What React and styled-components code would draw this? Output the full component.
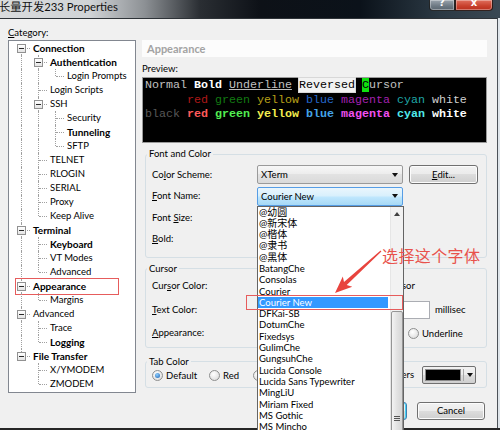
import React from "react";
import styled, { createGlobalStyle } from "styled-components";

const UI = `Lato, "Noto Sans CJK SC", sans-serif`;

const Global = createGlobalStyle`
  html, body { margin: 0; padding: 0; overflow: hidden; width: 500px; height: 430px; background: #f0f0f0; }
  body { font-family: ${UI}; font-size: 9.5px; color: #000; }
  * { box-sizing: border-box; }
`;

/* ---------- window chrome ---------- */
const Window = styled.div`
  position: relative;
  width: 500px;
  height: 430px;
  display: flex;
  flex-direction: column;
  border-bottom: 2px solid #262626;
`;
const TitleBar = styled.div`
  height: 18px;
  flex: none;
  display: flex;
  align-items: flex-start;
  background: linear-gradient(90deg, #d9dbdd 0, #d0d3d6 90px, #8c9094 145px, #2a2e33 200px, #0d1117 260px, #0b121a 360px, #2b3944 440px, #3a4853 500px);
`;
const TitleText = styled.div`
  font-family: ${UI};
  font-size: 11.3px;
  line-height: 14px;
  text-indent: -1px;
  color: #111;
  white-space: nowrap;
`;
const Caption = styled.div`
  margin-left: auto;
  margin-right: 7px;
  display: flex;
`;
const CapButton = styled.div`
  width: ${(p) => p.$w}px;
  height: 11px;
  border: 1px solid rgba(20, 20, 20, 0.85);
  border-top: none;
  border-radius: ${(p) => (p.$close ? "0 0 4px 0" : "0 0 0 4px")};
  background: ${(p) =>
    p.$close
      ? "linear-gradient(#e0705e, #c8402c 60%, #b8301e)"
      : "linear-gradient(#9aa4ad, #6d7983 60%, #5a6670)"};
  box-shadow: inset 0 0 0 1px rgba(255, 255, 255, 0.35);
  color: #fff;
  font-family: "DejaVu Sans", sans-serif;
  font-weight: bold;
  font-size: 10px;
  line-height: 6px;
  text-align: center;
  overflow: hidden;
`;
const Frame = styled.div`
  flex: 1;
  display: flex;
  min-height: 0;
`;
const Client = styled.div`
  flex: 1;
  background: #f0f0f0;
  border-top: 1px solid #2e3338;
  border-right: 1px solid #4c5258;
  display: flex;
  align-items: flex-start;
`;
const FrameEdge = styled.div`
  width: 2px;
  background: #dfe5ea;
`;

/* ---------- left: category tree ---------- */
const LeftColumn = styled.div`
  width: 136px;
  padding: 7px 0 0 8px;
`;
const Label = styled.div`
  line-height: ${(p) => p.$lh || 14}px;
  height: ${(p) => p.$lh || 14}px;
  white-space: nowrap;
  width: ${(p) => (p.$w ? p.$w + "px" : "auto")};
  margin-top: ${(p) => p.$mt || 0}px;
  flex: none;
`;
const Key = styled.span`
  text-decoration: underline;
`;
const TreeBox = styled.div`
  width: 128px;
  height: 353px;
  border: 1px solid #828790;
  background: #fff;
  padding-left: 4px;
`;
const TreeRow = styled.div`
  position: relative;
  display: flex;
  height: 14px;
  &::after {
    content: "";
    display: ${(p) => (p.$marked ? "block" : "none")};
    position: absolute;
    left: 2px;
    top: -1px;
    width: 102px;
    height: 15px;
    border: 1.5px solid #e65c5c;
  }
`;
const Guide = styled.div`
  position: relative;
  width: 17px;
  flex: none;
  &::before {
    content: "";
    display: ${(p) => (p.$line ? "block" : "none")};
    position: absolute;
    left: 8px;
    top: 0;
    bottom: 0;
    border-left: 1px dotted #a0a0a0;
  }
`;
const Connector = styled.div`
  position: relative;
  width: 17px;
  flex: none;
  &::before {
    content: "";
    position: absolute;
    left: 8px;
    top: ${(p) => (p.$rootFirst ? 7 : 0)}px;
    bottom: ${(p) => (p.$last ? 7 : 0)}px;
    border-left: 1px dotted #a0a0a0;
  }
  &::after {
    content: "";
    position: absolute;
    left: 9px;
    right: 0;
    top: 7px;
    border-top: 1px dotted #a0a0a0;
  }
`;
const Expander = styled.div`
  position: absolute;
  left: 4px;
  top: 3px;
  width: 9px;
  height: 9px;
  border: 1px solid #919191;
  background: linear-gradient(#ffffff, #e4e4e4);
  z-index: 1;
  &::after {
    content: "";
    position: absolute;
    left: 1px;
    top: 3px;
    width: 5px;
    height: 1px;
    background: #2a2a2a;
  }
`;
const TreeText = styled.span`
  margin-left: 2px;
  padding: 0 1px;
  line-height: 14px;
  white-space: nowrap;
  font-weight: ${(p) => (p.$bold ? 700 : 400)};
  font-size: ${(p) => (p.$bold ? 10 : 9.5)}px;
`;

const TREE = [
  {
    label: "Connection",
    bold: true,
    children: [
      { label: "Authentication", bold: true, children: [{ label: "Login Prompts" }] },
      { label: "Login Scripts" },
      {
        label: "SSH",
        children: [{ label: "Security" }, { label: "Tunneling", bold: true }, { label: "SFTP" }],
      },
      { label: "TELNET" },
      { label: "RLOGIN" },
      { label: "SERIAL" },
      { label: "Proxy" },
      { label: "Keep Alive" },
    ],
  },
  {
    label: "Terminal",
    bold: true,
    children: [{ label: "Keyboard", bold: true }, { label: "VT Modes" }, { label: "Advanced" }],
  },
  { label: "Appearance", bold: true, marked: true, children: [{ label: "Margins" }] },
  { label: "Advanced", children: [{ label: "Trace" }, { label: "Logging", bold: true }] },
  { label: "File Transfer", bold: true, children: [{ label: "X/YMODEM" }, { label: "ZMODEM" }] },
];

function flatten(nodes, depth = 0, guides = [], out = []) {
  nodes.forEach((n, i) => {
    const last = i === nodes.length - 1;
    out.push({ ...n, depth, guides, first: i === 0, last });
    if (n.children) flatten(n.children, depth + 1, [...guides, !last], out);
  });
  return out;
}

function CategoryTree() {
  const rows = flatten(TREE);
  return (
    <TreeBox>
      {rows.map((r, i) => (
        <TreeRow key={i} $marked={r.marked}>
          {r.guides.map((g, j) => (
            <Guide key={j} $line={g} />
          ))}
          <Connector $rootFirst={r.depth === 0 && r.first} $last={r.last}>
            {r.children && <Expander />}
          </Connector>
          <TreeText $bold={r.bold}>{r.label}</TreeText>
        </TreeRow>
      ))}
    </TreeBox>
  );
}

/* ---------- right panel ---------- */
const RightColumn = styled.div`
  width: 345px;
  margin-left: 6px;
  padding-top: 21px;
  display: flex;
  flex-direction: column;
`;
const PageHeader = styled.div`
  height: 17px;
  background: #fcfcfc;
  color: #a3a3a3;
  font-weight: 700;
  font-size: 11px;
  line-height: 17px;
  padding-left: 5px;
`;
const Preview = styled.div`
  height: 66px;
  background: #000;
  border: 1px solid #9a9a9a;
  padding: 0 2px;
  font-family: "Liberation Mono", "Courier New", monospace;
  font-size: 11.67px;
  line-height: 14.5px;
  white-space: pre;
  color: #c0c0c0;
`;
const Seg = styled.span`
  color: ${(p) => p.$c || "#c0c0c0"};
  font-weight: ${(p) => (p.$b ? 700 : 400)};
  text-decoration: ${(p) => (p.$u ? "underline" : "none")};
  background: ${(p) => p.$bg || "transparent"};
  outline: ${(p) => (p.$box ? "1px solid #d8d8d8" : "none")};
`;

const Group = styled.fieldset`
  margin: ${(p) => p.$mt}px 0 0 3px;
  border: 1px solid #d5dfe5;
  border-radius: 3px;
  padding: ${(p) => p.$pad};
  min-width: 0;
  display: flex;
  flex-direction: column;
  gap: ${(p) => p.$gap || 0}px;
`;
const Legend = styled.legend`
  margin-left: -5px;
  padding: 0 2px;
  line-height: 12px;
  font-size: 9.5px;
`;
const FormRow = styled.div`
  display: flex;
  align-items: center;
  height: ${(p) => p.$h || 19}px;
`;
const Combo = styled.div`
  position: relative;
  width: ${(p) => p.$w}px;
  height: 19px;
  flex: none;
  display: flex;
  align-items: center;
  padding: 0 4px 0 3px;
  border: 1px solid ${(p) => (p.$focus ? "#569de5" : "#9a9a9a")};
  border-radius: 2px;
  background: ${(p) =>
    p.$focus
      ? "linear-gradient(#eaf6fd 0%, #d9f0fc 45%, #bee6fd 55%, #a7d9f5 100%)"
      : "linear-gradient(#f7f7f7, #ececec 50%, #e2e2e2 50%, #dadada)"};
  white-space: nowrap;
`;
const DropArrow = styled.span`
  margin-left: auto;
  width: 0;
  height: 0;
  border-left: 3.5px solid transparent;
  border-right: 3.5px solid transparent;
  border-top: 4px solid #111;
`;
const Button = styled.div`
  width: ${(p) => p.$w}px;
  height: ${(p) => p.$h || 19}px;
  margin-left: ${(p) => p.$ml || 0}px;
  flex: none;
  display: flex;
  align-items: center;
  justify-content: center;
  border: 1px solid ${(p) => (p.$default ? "#3c7fb1" : "#707070")};
  border-radius: 3px;
  background: linear-gradient(#f2f2f2, #ebebeb 50%, #dddddd 50%, #cfcfcf);
  box-shadow: ${(p) => (p.$default ? "inset 0 0 0 1px #48d4f8" : "inset 0 0 0 1px #fcfcfc")};
  white-space: nowrap;
`;
const Swatch = styled.div`
  width: ${(p) => p.$w}px;
  height: 18px;
  flex: none;
  display: flex;
  align-items: stretch;
  padding: 2px 0 2px 2px;
  border: 1px solid #707070;
  border-radius: 2px;
  background: linear-gradient(#f2f2f2, #ebebeb 50%, #dddddd 50%, #cfcfcf);
`;
const SwatchColor = styled.div`
  flex: 1;
  background: ${(p) => p.$color};
  border: 1px solid #8a8a8a;
`;
const SwatchDrop = styled.div`
  width: 12px;
  display: flex;
  align-items: center;
  justify-content: center;
  border-left: 1px solid #a8a8a8;
  margin-left: 2px;
  & > span { margin: 0; }
`;
const Check = styled.span`
  width: 11px;
  height: 11px;
  flex: none;
  border: 1px solid #8e8f8f;
  background: linear-gradient(135deg, #dcdcdc, #fff);
  margin-right: 3px;
`;
const RadioItem = styled.div`
  display: flex;
  align-items: center;
  width: ${(p) => (p.$w ? p.$w + "px" : "auto")};
  flex: none;
  white-space: nowrap;
`;
const RadioDot = styled.span`
  position: relative;
  width: 11px;
  height: 11px;
  flex: none;
  border-radius: 50%;
  border: 1px solid #8e8f8f;
  background: radial-gradient(circle at 40% 35%, #ffffff, #d6d6d6);
  margin-right: 3px;
  &::after {
    content: "";
    display: ${(p) => (p.$on ? "block" : "none")};
    position: absolute;
    left: 2px;
    top: 2px;
    width: 5px;
    height: 5px;
    border-radius: 50%;
    background: radial-gradient(circle at 40% 35%, #8fd0ff, #1b5fb0);
  }
`;
const TextBox = styled.div`
  width: ${(p) => p.$w}px;
  height: 18px;
  flex: none;
  border: 1px solid #abadb3;
  background: #fff;
`;
const Spacer = styled.div`
  width: ${(p) => p.$w}px;
  flex: none;
`;
const PushRight = styled.div`
  margin-left: auto;
  display: flex;
  align-items: center;
  gap: 8px;
`;
const ButtonRow = styled.div`
  margin-top: 14px;
  display: flex;
  justify-content: flex-end;
  gap: 10px;
  padding-right: 2px;
`;

/* ---------- dropdown list ---------- */
const ComboAnchor = styled.div`
  position: relative;
  flex: none;
`;
const DropList = styled.div`
  position: absolute;
  top: 100%;
  left: 0;
  width: 147px;
  height: 232px;
  z-index: 10;
  display: flex;
  border: 1px solid #646464;
  background: #fff;
`;
const ListItems = styled.div`
  flex: 1;
  padding-right: 2px;
`;
const ListItem = styled.div`
  position: relative;
  height: 11.3px;
  line-height: 11.3px;
  padding-left: 1px;
  white-space: nowrap;
  font-size: ${(p) => (p.$cjk ? 10 : 9.5)}px;
  background: ${(p) => (p.$sel ? "#3399ff" : "transparent")};
  color: ${(p) => (p.$sel ? "#fff" : "#000")};
  &::after {
    content: "";
    display: ${(p) => (p.$sel ? "block" : "none")};
    position: absolute;
    left: -12px;
    right: -15px;
    top: -2px;
    bottom: -2px;
    border: 1.5px solid #e65c5c;
  }
`;
const ScrollBar = styled.div`
  width: 13px;
  flex: none;
  display: flex;
  flex-direction: column;
  background: #f2f2f2;
  border-left: 1px solid #e6e6e6;
`;
const ScrollUp = styled.div`
  height: 14px;
  display: flex;
  align-items: center;
  justify-content: center;
  &::after {
    content: "";
    border-left: 3px solid transparent;
    border-right: 3px solid transparent;
    border-bottom: 4px solid #404040;
  }
`;
const ScrollThumb = styled.div`
  margin-top: 90px;
  flex: 1;
  border: 1px solid #959595;
  border-radius: 2px;
  background: linear-gradient(90deg, #f3f3f3, #e2e2e2 50%, #d6d6d6);
  display: flex;
  justify-content: center;
  padding-top: 104px;
`;
const Grip = styled.div`
  width: 6px;
  height: 5px;
  background: repeating-linear-gradient(#555 0 1px, transparent 1px 2px);
`;

const FONTS = [
  ["@幼圆", true],
  ["@新宋体", true],
  ["@楷体", true],
  ["@隶书", true],
  ["@黑体", true],
  ["BatangChe"],
  ["Consolas"],
  ["Courier"],
  ["Courier New", false, true],
  ["DFKai-SB"],
  ["DotumChe"],
  ["Fixedsys"],
  ["GulimChe"],
  ["GungsuhChe"],
  ["Lucida Console"],
  ["Lucida Sans Typewriter"],
  ["MingLiU"],
  ["Miriam Fixed"],
  ["MS Gothic"],
  ["MS Mincho"],
];

/* ---------- annotation ---------- */
const AnnotText = styled.div`
  position: absolute;
  left: 382px;
  top: 246px;
  z-index: 20;
  font-family: "Noto Sans CJK SC", sans-serif;
  font-size: 16px;
  line-height: 18px;
  letter-spacing: 0.4px;
  color: #e8524c;
  white-space: nowrap;
`;
const AnnotArrow = styled.svg`
  position: absolute;
  left: 330px;
  top: 245px;
  z-index: 20;
`;

function ColorPick({ w, color }) {
  return (
    <Swatch $w={w}>
      <SwatchColor $color={color} />
      <SwatchDrop>
        <DropArrow />
      </SwatchDrop>
    </Swatch>
  );
}

export default function App() {
  return (
    <>
      <Global />
      <Window>
        <TitleBar>
          <TitleText>长量开发233 Properties</TitleText>
          <Caption>
            <CapButton $w={26}>?</CapButton>
            <CapButton $w={38} $close>x</CapButton>
          </Caption>
        </TitleBar>
        <Frame>
          <Client>
            <LeftColumn>
              <Label $lh={14}>
                <Key>C</Key>ategory:
              </Label>
              <CategoryTree />
            </LeftColumn>

            <RightColumn>
              <PageHeader>Appearance</PageHeader>
              <Label $lh={16} $mt={4}>Preview:</Label>
              <Preview>
                <div>
                  <Seg>Normal </Seg>
                  <Seg $c="#ffffff" $b>Bold</Seg>
                  <Seg> </Seg>
                  <Seg $u>Underline</Seg>
                  <Seg> </Seg>
                  <Seg $c="#000" $bg="#f2f2f2" $box>Reversed</Seg>
                  <Seg> </Seg>
                  <Seg $c="#000" $bg="#10e010">C</Seg>
                  <Seg>ursor</Seg>
                </div>
                <div>
                  <Seg>      </Seg>
                  <Seg $c="#b01818">red</Seg> <Seg $c="#127a12">green</Seg>{" "}
                  <Seg $c="#b8a018">yellow</Seg> <Seg $c="#2468cc">blue</Seg>{" "}
                  <Seg $c="#a420b0">magenta</Seg> <Seg $c="#1fa8a8">cyan</Seg>{" "}
                  <Seg $c="#d0d0d0">white</Seg>
                </div>
                <div>
                  <Seg $c="#585858">black</Seg> <Seg $c="#ff5a5a" $b>red</Seg>{" "}
                  <Seg $c="#52ee52" $b>green</Seg> <Seg $c="#f4ee50" $b>yellow</Seg>{" "}
                  <Seg $c="#44a4e8" $b>blue</Seg> <Seg $c="#f050f0" $b>magenta</Seg>{" "}
                  <Seg $c="#50eaea" $b>cyan</Seg> <Seg $c="#ffffff" $b>white</Seg>
                </div>
              </Preview>

              <Group $mt={5} $pad="5px 6px 8px" $gap={2.5}>
                <Legend>Font and Color</Legend>
                <FormRow>
                  <Label $w={105}>
                    Co<Key>l</Key>or Scheme:
                  </Label>
                  <Combo $w={146}>
                    XTerm
                    <DropArrow />
                  </Combo>
                  <Button $w={69} $ml={6}>
                    <Key>E</Key>dit...
                  </Button>
                </FormRow>
                <FormRow>
                  <Label $w={105}>
                    <Key>F</Key>ont Name:
                  </Label>
                  <ComboAnchor>
                    <Combo $w={146} $focus>
                      Courier New
                      <DropArrow />
                    </Combo>
                    <DropList>
                      <ListItems>
                        {FONTS.map(([name, cjk, sel]) => (
                          <ListItem key={name} $cjk={cjk} $sel={sel}>
                            {name}
                          </ListItem>
                        ))}
                      </ListItems>
                      <ScrollBar>
                        <ScrollUp />
                        <ScrollThumb>
                          <Grip />
                        </ScrollThumb>
                      </ScrollBar>
                    </DropList>
                  </ComboAnchor>
                </FormRow>
                <FormRow>
                  <Label $w={105}>
                    Font <Key>S</Key>ize:
                  </Label>
                  <Combo $w={60}>
                    <DropArrow />
                  </Combo>
                </FormRow>
                <FormRow>
                  <Label $w={105}>
                    <Key>B</Key>old:
                  </Label>
                  <Combo $w={120}>
                    <DropArrow />
                  </Combo>
                </FormRow>
              </Group>

              <Group $mt={5} $pad="2px 6px 4px" $gap={4.5}>
                <Legend>Cursor</Legend>
                <FormRow>
                  <Label $w={105}>
                    Cur<Key>s</Key>or Color:
                  </Label>
                  <ColorPick w={74} color="#00ff00" />
                  <Spacer $w={8} />
                  <Check />
                  <Label>Blinking cursor</Label>
                </FormRow>
                <FormRow>
                  <Label $w={105}>
                    <Key>T</Key>ext Color:
                  </Label>
                  <ColorPick w={74} color="#000000" />
                  <Spacer $w={54} />
                  <TextBox $w={45} />
                  <Spacer $w={5} />
                  <Label>millisec</Label>
                </FormRow>
                <FormRow>
                  <Label $w={105}>
                    <Key>A</Key>ppearance:
                  </Label>
                  <RadioItem $w={75}>
                    <RadioDot $on />
                  </RadioItem>
                  <RadioItem $w={76}>
                    <RadioDot />
                  </RadioItem>
                  <RadioItem>
                    <RadioDot />
                    Underline
                  </RadioItem>
                </FormRow>
              </Group>

              <Group $mt={8} $pad="0 10px 4px 6px">
                <Legend>Tab Color</Legend>
                <FormRow $h={15}>
                  <RadioItem $w={57}>
                    <RadioDot $on />
                    Default
                  </RadioItem>
                  <RadioItem $w={44}>
                    <RadioDot />
                    Red
                  </RadioItem>
                  <RadioItem $w={50}>
                    <RadioDot />
                  </RadioItem>
                  <PushRight>
                    <Label>Others</Label>
                    <ColorPick w={54} color="#000000" />
                  </PushRight>
                </FormRow>
              </Group>

              <ButtonRow>
                <Button $w={68} $h={18} $default>
                  OK
                </Button>
                <Button $w={68} $h={18}>
                  Cancel
                </Button>
              </ButtonRow>
            </RightColumn>
          </Client>
          <FrameEdge />
        </Frame>

        <AnnotText>选择这个字体</AnnotText>
        <AnnotArrow width="60" height="55" viewBox="0 0 60 55">
          <polygon
            points="5,48 22.3,41.7 16.7,40 51.4,6.4 50.6,5.6 14,37.1 12.8,31.4"
            fill="#e8443e"
          />
        </AnnotArrow>
      </Window>
    </>
  );
}
